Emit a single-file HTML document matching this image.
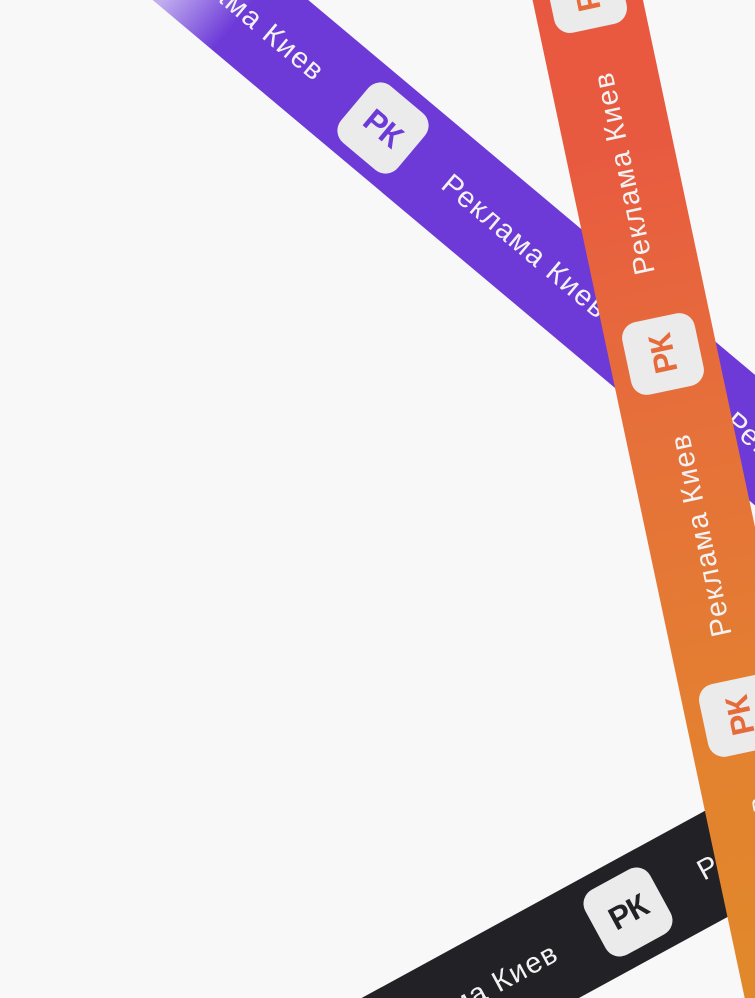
<!DOCTYPE html>
<html><head><meta charset="utf-8"><style>
html,body{margin:0;padding:0;width:755px;height:998px;overflow:hidden;background:#f8f8f8}
svg{display:block}
.t{fill:#f2f2f2;font-family:"Liberation Sans","DejaVu Sans",sans-serif;font-size:29px;letter-spacing:1.5px}
.k{font-family:"Liberation Sans","DejaVu Sans",sans-serif;font-weight:bold;font-size:32px;letter-spacing:-1px}
</style></head><body>
<svg width="755" height="998" viewBox="0 0 755 998" xmlns="http://www.w3.org/2000/svg" style="overflow:hidden">
<defs>
<clipPath id="c"><rect x="0" y="0" width="755" height="998"/></clipPath>
<linearGradient id="gp" gradientUnits="userSpaceOnUse" x1="-700" y1="0" x2="700" y2="0">
<stop offset="0" stop-color="#d6cbf3"/><stop offset="0.321" stop-color="#c0acef"/><stop offset="0.371" stop-color="#6d3ad8"/><stop offset="1" stop-color="#6d3ad8"/>
</linearGradient>
<linearGradient id="go" gradientUnits="userSpaceOnUse" x1="-700" y1="0" x2="700" y2="0">
<stop offset="0" stop-color="#e08a2a"/><stop offset="0.2" stop-color="#e3822f"/><stop offset="0.45" stop-color="#e6703a"/><stop offset="0.65" stop-color="#e85a40"/><stop offset="1" stop-color="#e8553f"/>
</linearGradient>
</defs>
<g clip-path="url(#c)">
<rect x="0" y="0" width="755" height="998" fill="#f8f8f8"/>
<g transform="translate(628,912) rotate(-28.6)">
<rect x="-600" y="-52" width="1200" height="104" fill="#222126"/>
<text class="t" x="-185" y="0" text-anchor="middle" dominant-baseline="central">Реклама Киев</text>
<text class="t" x="185" y="0" text-anchor="middle" dominant-baseline="central">Реклама Киев</text>
<rect x="-37" y="-37" width="74" height="74" rx="16" fill="#ebebeb"/><text class="k" x="0" y="0" fill="#222126" text-anchor="middle" dominant-baseline="central">РК</text>
</g>
<g transform="translate(383,128) rotate(40)">
<rect x="-600" y="-50" width="1200" height="100" fill="url(#gp)"/>
<text class="t" x="-185" y="0" text-anchor="middle" dominant-baseline="central">Реклама Киев</text>
<text class="t" x="185" y="0" text-anchor="middle" dominant-baseline="central">Реклама Киев</text>
<text class="t" x="555" y="0" text-anchor="middle" dominant-baseline="central">Реклама Киев</text>
<rect x="-37" y="-37" width="74" height="74" rx="16" fill="#ebebeb"/><text class="k" x="0" y="0" fill="#6d3ad8" text-anchor="middle" dominant-baseline="central">РК</text>
<rect x="333" y="-37" width="74" height="74" rx="16" fill="#ebebeb"/><text class="k" x="370" y="0" fill="#6d3ad8" text-anchor="middle" dominant-baseline="central">РК</text>
</g>
<g transform="translate(663,354) rotate(-102)">
<rect x="-700" y="-54" width="1200" height="108" fill="url(#go)"/>
<text class="t" x="-555" y="0" text-anchor="middle" dominant-baseline="central">Реклама Киев</text>
<text class="t" x="-185" y="0" text-anchor="middle" dominant-baseline="central">Реклама Киев</text>
<text class="t" x="185" y="0" text-anchor="middle" dominant-baseline="central">Реклама Киев</text>
<rect x="-407" y="-37" width="74" height="74" rx="16" fill="#ebebeb"/><text class="k" x="-370" y="0" fill="#e66a3a" text-anchor="middle" dominant-baseline="central">РК</text>
<rect x="-37" y="-37" width="74" height="74" rx="16" fill="#ebebeb"/><text class="k" x="0" y="0" fill="#e66a3a" text-anchor="middle" dominant-baseline="central">РК</text>
<rect x="333" y="-37" width="74" height="74" rx="16" fill="#ebebeb"/><text class="k" x="370" y="0" fill="#e66a3a" text-anchor="middle" dominant-baseline="central">РК</text>
</g>
</g>
</svg>
</body></html>
